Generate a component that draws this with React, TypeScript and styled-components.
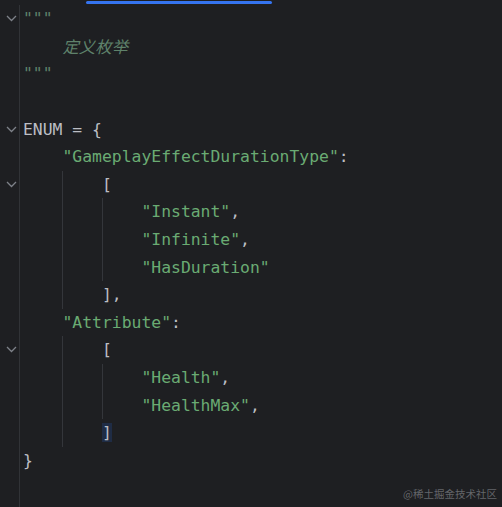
import React from "react";
import styled, { createGlobalStyle } from "styled-components";

const GlobalStyle = createGlobalStyle`
  html, body { margin: 0; padding: 0; background: #1e1f22; }
  body { overflow: hidden; }
`;

const Editor = styled.div`
  position: relative;
  display: flex;
  flex-direction: column;
  width: 502px;
  height: 507px;
  background: #1e1f22;
  overflow: hidden;
`;

const TabStrip = styled.div`
  display: flex;
  height: 5px;
  flex: none;
  background: #1e1f22;
`;

const TabIndicator = styled.div`
  margin-left: 86px;
  margin-top: 1px;
  width: 186px;
  height: 3px;
  border-radius: 2px;
  background: #3574f0;
`;

const Body = styled.div`
  display: flex;
  flex: 1;
  min-height: 0;
`;

const Gutter = styled.div`
  width: 19px;
  flex: none;
  border-right: 1px solid #313337;
  display: flex;
  flex-direction: column;
`;

const GutterCell = styled.div`
  height: 27.6px;
  display: flex;
  align-items: center;
  justify-content: flex-end;
  padding-right: 2px;
`;

const Code = styled.div`
  flex: 1;
  display: flex;
  flex-direction: column;
  padding-left: 3px;
  font-family: "DejaVu Sans Mono", "Noto Sans CJK SC", monospace;
  font-size: 16.4px;
  color: #bcbec4;
`;

const Line = styled.div`
  display: flex;
  align-items: stretch;
  height: 27.6px;
  white-space: pre;
`;

const Indent = styled.span<{ $guide?: boolean }>`
  display: inline-block;
  flex: none;
  width: 4ch;
  box-shadow: ${(p) => (p.$guide ? "inset 1px 0 0 #34363b" : "none")};
`;

const Text = styled.span`
  display: flex;
  align-items: center;
`;

const Str = styled.span`
  color: #6aab73;
`;

const Doc = styled.span<{ $cjk?: boolean }>`
  color: #5f826b;
  font-style: italic;
  font-family: ${(p) =>
    p.$cjk ? '"Noto Sans CJK SC", sans-serif' : '"DejaVu Sans Mono", monospace'};
`;

const Brace = styled.span<{ $match?: boolean }>`
  color: #bcbec4;
  background: ${(p) => (p.$match ? "#1f2c45" : "transparent")};
`;

const Watermark = styled.div`
  position: absolute;
  right: 5px;
  bottom: 6px;
  font-family: "Noto Sans CJK SC", sans-serif;
  font-size: 10.5px;
  color: rgba(160, 162, 168, 0.55);
`;

const Chevron = () => (
  <svg width="11" height="7" viewBox="0 0 11 7">
    <path d="M1 1 L5.5 5.5 L10 1" fill="none" stroke="#7e8289" strokeWidth="1.3" />
  </svg>
);

type L = { fold?: boolean; indent: boolean[]; content: React.ReactNode };

const lines: L[] = [
  { fold: true, indent: [], content: <Doc>"""</Doc> },
  { indent: [false], content: <Doc $cjk>定义枚举</Doc> },
  { indent: [], content: <Doc>"""</Doc> },
  { indent: [], content: "" },
  { fold: true, indent: [], content: <>ENUM = {"{"}</> },
  { indent: [false], content: <><Str>"GameplayEffectDurationType"</Str>:</> },
  { fold: true, indent: [false, true], content: <Brace>[</Brace> },
  { indent: [false, true, true], content: <><Str>"Instant"</Str>,</> },
  { indent: [false, true, true], content: <><Str>"Infinite"</Str>,</> },
  { indent: [false, true, true], content: <Str>"HasDuration"</Str> },
  { indent: [false, true], content: <><Brace>]</Brace>,</> },
  { indent: [false], content: <><Str>"Attribute"</Str>:</> },
  { fold: true, indent: [false, true], content: <Brace>[</Brace> },
  { indent: [false, true, true], content: <><Str>"Health"</Str>,</> },
  { indent: [false, true, true], content: <><Str>"HealthMax"</Str>,</> },
  { indent: [false, true], content: <Brace $match>]</Brace> },
  { indent: [], content: <Brace>{"}"}</Brace> },
];

export default function App() {
  return (
    <>
      <GlobalStyle />
      <Editor>
        <TabStrip>
          <TabIndicator />
        </TabStrip>
        <Body>
          <Gutter>
            {lines.map((l, i) => (
              <GutterCell key={i}>{l.fold ? <Chevron /> : null}</GutterCell>
            ))}
          </Gutter>
          <Code>
            {lines.map((l, i) => (
              <Line key={i}>
                {l.indent.map((g, j) => (
                  <Indent key={j} $guide={g} />
                ))}
                <Text>{l.content}</Text>
              </Line>
            ))}
          </Code>
        </Body>
        <Watermark>@稀土掘金技术社区</Watermark>
      </Editor>
    </>
  );
}
